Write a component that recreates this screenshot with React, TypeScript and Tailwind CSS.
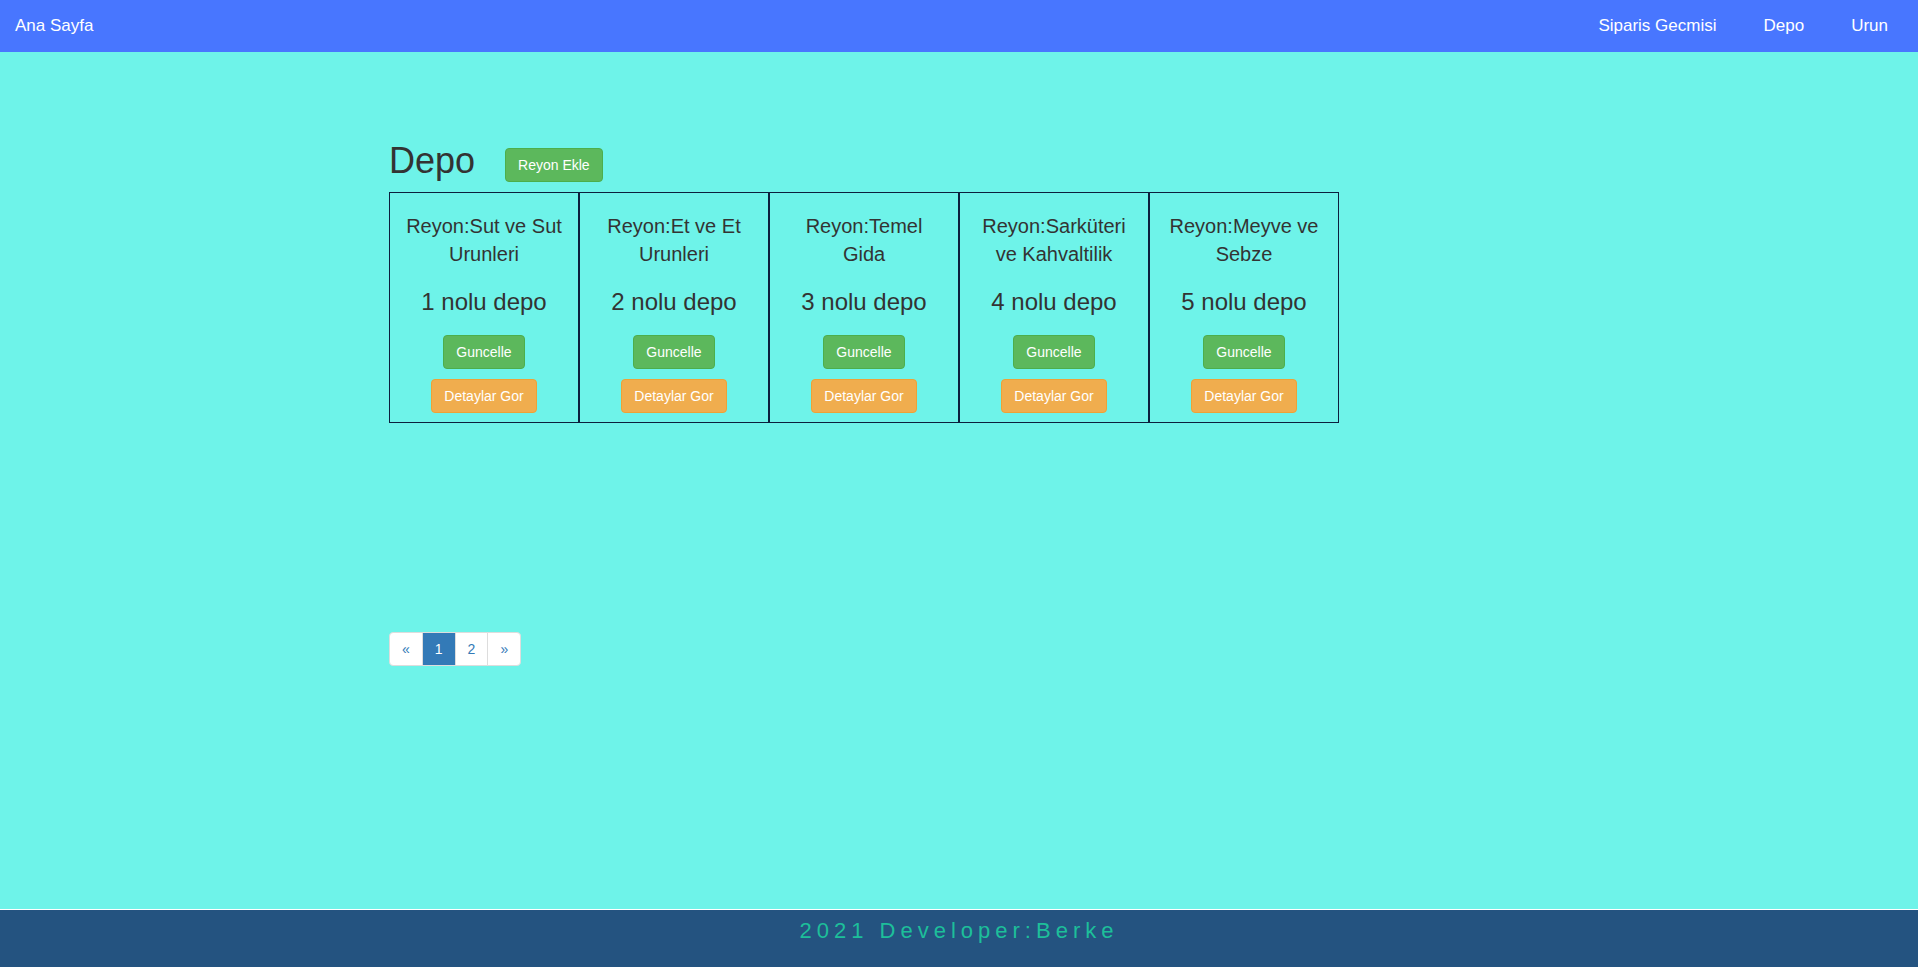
import React from 'react';

interface Reyon {
  name: string;
  depo: string;
}

const reyonlar: Reyon[] = [
  { name: 'Reyon:Sut ve Sut Urunleri', depo: '1 nolu depo' },
  { name: 'Reyon:Et ve Et Urunleri', depo: '2 nolu depo' },
  { name: 'Reyon:Temel Gida', depo: '3 nolu depo' },
  { name: 'Reyon:Sarküteri ve Kahvaltilik', depo: '4 nolu depo' },
  { name: 'Reyon:Meyve ve Sebze', depo: '5 nolu depo' },
];

function Navbar() {
  return (
    <nav className="h-[52px] bg-[#4876ff] flex items-center justify-between pl-[15px] pr-[30px] text-white text-[17px]">
      <a href="#">Ana Sayfa</a>
      <ul className="flex items-center gap-[47px]">
        <li><a href="#">Siparis Gecmisi</a></li>
        <li><a href="#">Depo</a></li>
        <li><a href="#">Urun</a></li>
      </ul>
    </nav>
  );
}

function ReyonCell({ reyon }: { reyon: Reyon }) {
  return (
    <div className="w-[190px] border border-[#0c1f3d] text-center px-[15px] pt-5 pb-[9px]">
      <h4 className="text-[20px] leading-[27.5px]">{reyon.name}</h4>
      <h3 className="mt-[20.5px] text-[24px] leading-[26.4px]">{reyon.depo}</h3>
      <div className="mt-5 flex flex-col items-center gap-[10px]">
        <button className="bg-[#5cb85c] border border-[#4cae4c] rounded-[4px] px-3 py-[6px] text-sm leading-5 text-white">
          Guncelle
        </button>
        <button className="bg-[#f0ad4e] border border-[#eea236] rounded-[4px] px-3 py-[6px] text-sm leading-5 text-white">
          Detaylar Gor
        </button>
      </div>
    </div>
  );
}

function Pagination() {
  const base = 'border border-[#ddd] px-3 py-[6px] text-sm leading-5 -ml-px';
  return (
    <ul className="flex mt-[209px] pl-px">
      <li><a href="#" className={`${base} block bg-white text-[#337ab7] rounded-l-[4px]`}>«</a></li>
      <li><a href="#" className={`${base} block bg-[#337ab7] border-[#337ab7] text-white`}>1</a></li>
      <li><a href="#" className={`${base} block bg-white text-[#337ab7]`}>2</a></li>
      <li><a href="#" className={`${base} block bg-white text-[#337ab7] rounded-r-[4px]`}>»</a></li>
    </ul>
  );
}

export default function App() {
  return (
    <div className="min-h-screen flex flex-col bg-[#6ef3e9] text-[#333] font-['Liberation_Sans',Arial,sans-serif]">
      <Navbar />
      <main className="flex-1">
        <div className="w-[1170px] mx-auto px-[15px] pt-[89px]">
          <div className="flex items-end">
            <h1 className="text-[36px] leading-[40px] mb-px">Depo</h1>
            <button className="ml-[30px] bg-[#5cb85c] border border-[#4cae4c] rounded-[4px] px-3 py-[6px] text-sm leading-5 text-white">
              Reyon Ekle
            </button>
          </div>
          <div className="flex mt-[10px]">
            {reyonlar.map((r) => (
              <ReyonCell key={r.depo} reyon={r} />
            ))}
          </div>
          <Pagination />
        </div>
      </main>
      <footer className="h-[58px] bg-[#245380] border-t border-white text-center pt-[6px]">
        <p className="text-[22px] leading-[30px] tracking-[5px] text-[#1dbf9a]">2021 Developer:Berke</p>
      </footer>
    </div>
  );
}
